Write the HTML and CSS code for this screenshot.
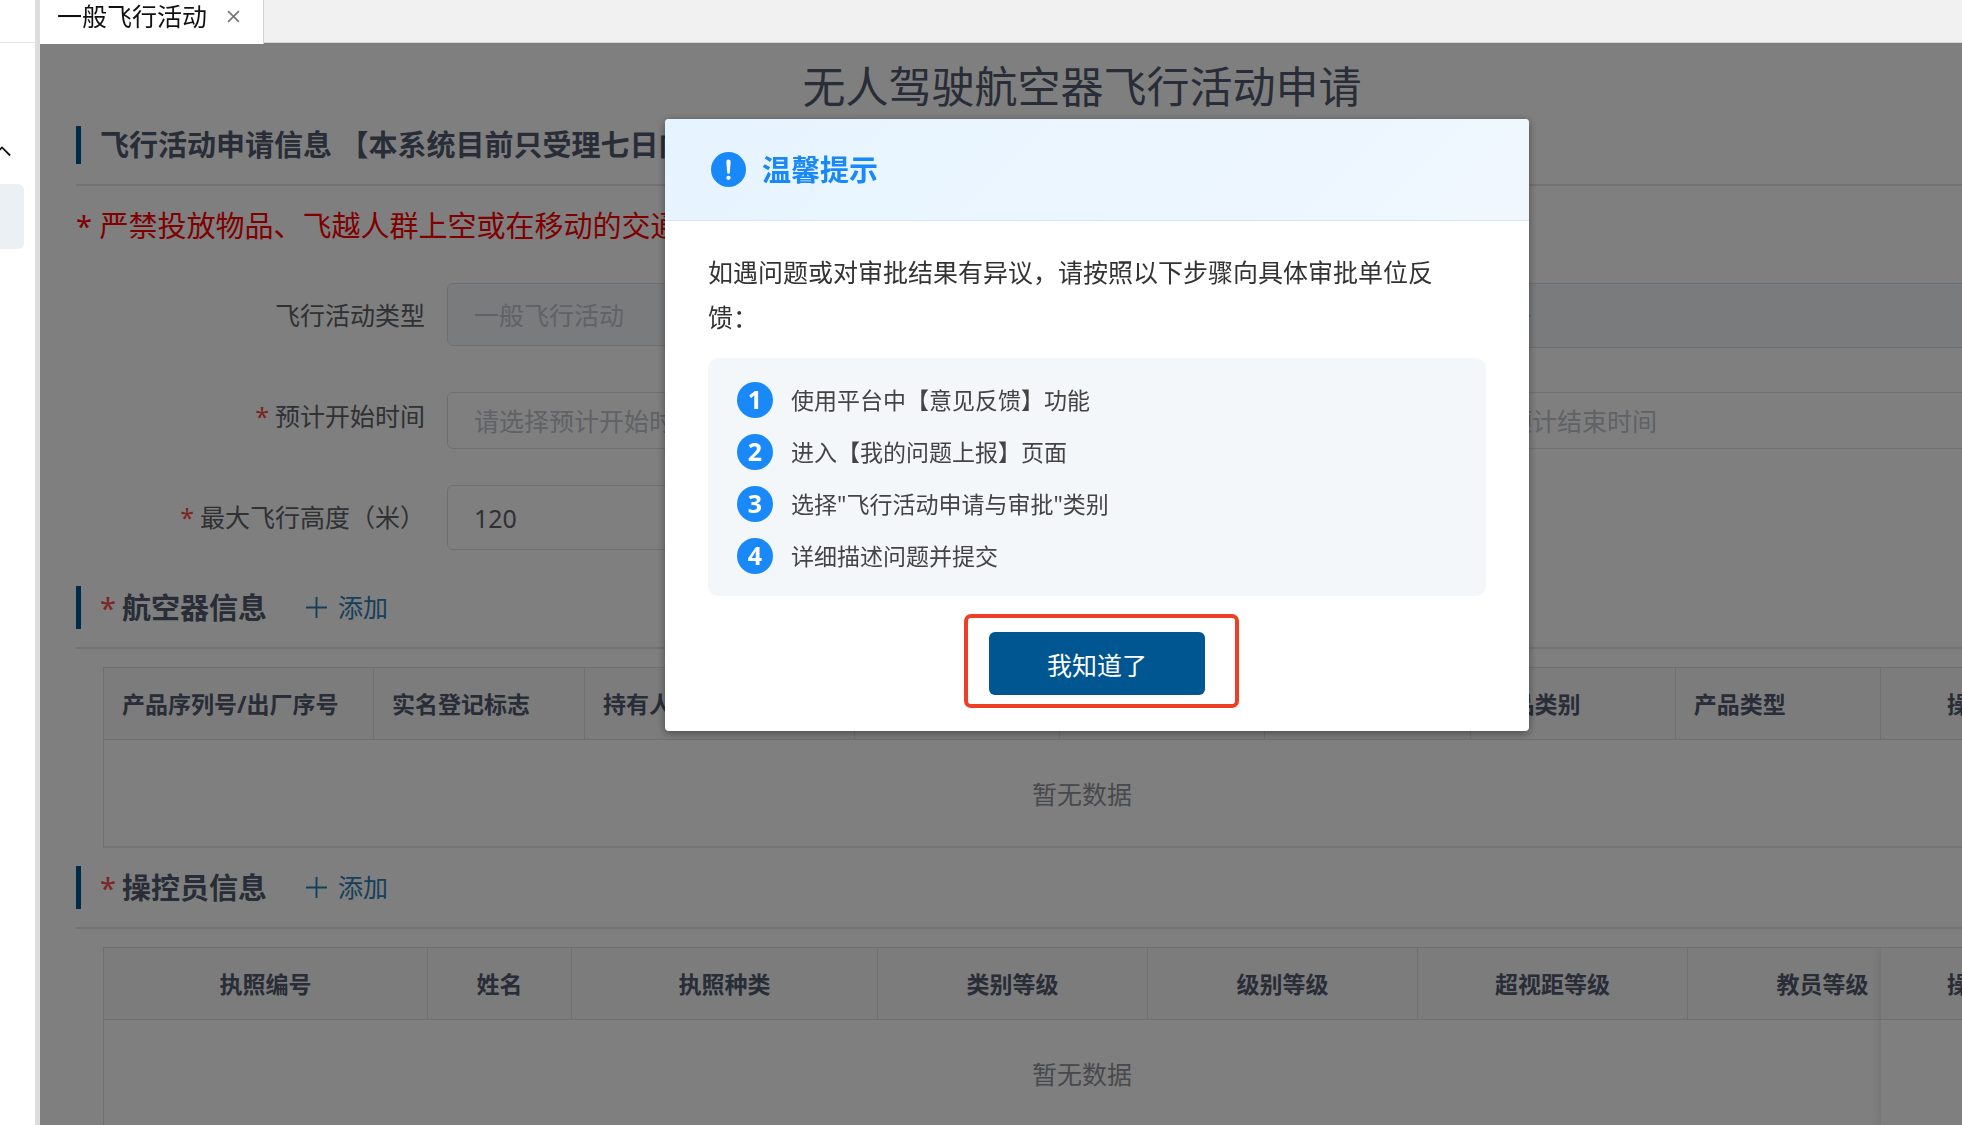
FILE: index.html
```html
<!DOCTYPE html>
<html lang="zh-CN">
<head>
    <meta charset="UTF-8">
    <meta name="viewport" content="width=device-width, initial-scale=1.0">
    <title>无人驾驶航空器飞行活动申请</title>
    <link rel="stylesheet" href="styles.css">
</head>
<body>
    <aside class="sidebar">
        <div class="sidebar-top"></div>
        <svg class="caret" viewBox="0 0 20 12"><path d="M1 11 L10 2 L19 11"/></svg>
        <div class="menu-active"></div>
    </aside>

    <div class="workspace">
        <nav class="tabs">
            <div class="tab">
                <a href="#">一般飞行活动</a>
                <button type="button" class="tab-close" aria-label="关闭">
                    <svg viewBox="0 0 12 12"><path d="M1 1 L11 11 M11 1 L1 11"/></svg>
                </button>
            </div>
        </nav>

        <main class="page">
            <h1>无人驾驶航空器飞行活动申请</h1>

            <div class="section-head">
                <h2 class="short">飞行活动申请信息 【本系统目前只受理七日内的申请】</h2>
            </div>
            <p class="warning">* 严禁投放物品、飞越人群上空或在移动的交通工具上操控</p>

            <form class="form">
                <label for="type">飞行活动类型</label>
                <select id="type" class="select-type" disabled><option>一般飞行活动</option></select>
                <label for="mode">任务性质</label>
                <select id="mode" disabled><option>其他任务</option></select>

                <label for="start" class="required">预计开始时间</label>
                <input type="text" id="start" class="date" placeholder="请选择预计开始时间">
                <label for="end" class="required">预计结束时间</label>
                <input type="text" id="end" class="date" placeholder="请选择预计结束时间">

                <label for="height" class="required">最大飞行高度（米）</label>
                <input type="text" id="height" value="120">
            </form>

            <div class="section-head">
                <h2 class="required">航空器信息</h2>
                <button type="button" class="add">
                    <svg viewBox="0 0 22 22"><path d="M11 0 V22 M0 11 H22"/></svg>添加
                </button>
            </div>
            <div class="table-box">
                <table class="aircraft">
                    <colgroup>
                        <col class="w270"><col class="w211"><col class="w270"><col><col><col><col><col><col class="w179">
                    </colgroup>
                    <thead>
                        <tr>
                            <th>产品序列号/出厂序号</th>
                            <th>实名登记标志</th>
                            <th>持有人</th>
                            <th>产品名称</th>
                            <th>产品型号</th>
                            <th>生产厂商</th>
                            <th>产品类别</th>
                            <th>产品类型</th>
                            <th class="center">操作</th>
                        </tr>
                    </thead>
                </table>
                <div class="empty">暂无数据</div>
            </div>

            <div class="section-head">
                <h2 class="required">操控员信息</h2>
                <button type="button" class="add">
                    <svg viewBox="0 0 22 22"><path d="M11 0 V22 M0 11 H22"/></svg>添加
                </button>
            </div>
            <div class="table-box has-fixed">
                <table class="pilots">
                    <colgroup>
                        <col class="w324"><col class="w144"><col class="w306"><col class="w270"><col class="w270"><col class="w270"><col class="w270"><col class="w179">
                    </colgroup>
                    <thead>
                        <tr>
                            <th>执照编号</th>
                            <th>姓名</th>
                            <th>执照种类</th>
                            <th>类别等级</th>
                            <th>级别等级</th>
                            <th>超视距等级</th>
                            <th>教员等级</th>
                            <th class="fixed">操作</th>
                        </tr>
                    </thead>
                </table>
                <div class="empty">暂无数据</div>
            </div>
        </main>

        <div class="mask">
            <section class="dialog" role="dialog" aria-labelledby="dialog-title">
                <header class="dialog-head">
                    <svg class="info" viewBox="0 0 36 36">
                        <circle cx="18" cy="18" r="18"/>
                        <path d="M15.800 10 a2.200 2.200 0 0 1 4.400 0 L19.400 21 a1.400 1.400 0 0 1 -2.800 0 Z"/>
                        <circle class="dot" cx="18" cy="26.500" r="2.200"/>
                    </svg>
                    <h3 id="dialog-title">温馨提示</h3>
                </header>
                <div class="dialog-body">
                    <p>如遇问题或对审批结果有异议，请按照以下步骤向具体审批单位反馈：</p>
                    <ol class="steps">
                        <li><span class="num">1</span>使用平台中【意见反馈】功能</li>
                        <li><span class="num">2</span>进入【我的问题上报】页面</li>
                        <li><span class="num">3</span>选择"飞行活动申请与审批"类别</li>
                        <li><span class="num">4</span>详细描述问题并提交</li>
                    </ol>
                </div>
                <footer class="dialog-foot">
                    <button type="button" class="confirm">我知道了</button>
                    <span class="highlight"></span>
                </footer>
            </section>
        </div>
    </div>
</body>
</html>
```
FILE: styles.css
```css
* {
    box-sizing: border-box;
}
body {
    margin: 0;
    display: flex;
    height: 100vh;
    overflow: hidden;
    background: #fff;
    color: #606266;
    font-family: "Noto Sans", "Noto Sans CJK SC", sans-serif;
    font-size: 25px;
}
h1, h2, h3, p, ol {
    margin: 0;
    padding: 0;
}
button, input, select {
    font: inherit;
}

/* Sidebar */
.sidebar {
    flex: none;
    width: 40px;
    border-right: 5px solid #ddd;
    overflow: hidden;
}
.sidebar-top {
    height: 43px;
    border-bottom: 1px solid #e4e4e4;
}
.caret {
    display: block;
    width: 18px;
    height: 12px;
    margin: 102px 0 27px -7px;
    fill: none;
    stroke: #111;
    stroke-width: 2;
}
.menu-active {
    width: 24px;
    height: 65px;
    border-radius: 0 6px 6px 0;
    background: #ebf0f4;
}

/* Tabs */
.workspace {
    position: relative;
    flex: 1;
    min-width: 0;
    height: 100vh;
    overflow: hidden;
}
.tabs {
    display: flex;
    height: 43px;
    background: #f1f1f1;
    border-bottom: 1px solid #d0d3d3;
}
.tab {
    position: relative;
    z-index: 2;
    display: flex;
    align-items: center;
    gap: 20px;
    height: 44px;
    padding: 0 23px 12px 17px;
    background: #fff;
    border-right: 1px solid #d0d3d3;
}
.tab a {
    color: #111;
    line-height: 32px;
    text-decoration: none;
}
.tab-close {
    display: flex;
    padding: 0;
    border: 0;
    background: none;
}
.tab-close svg {
    width: 13px;
    height: 13px;
    stroke: #777;
    stroke-width: 1.5;
}

/* Page runs past the right edge of the window */
.page {
    margin-right: -162px;
    padding: 14px 36px 0;
}
h1 {
    margin-bottom: 6px;
    color: #515a6e;
    font-size: 43px;
    font-weight: 400;
    line-height: 60px;
    text-align: center;
}
.section-head {
    display: flex;
    align-items: center;
    height: 63px;
    padding-bottom: 18px;
    border-bottom: 2px solid #e4e4e4;
}
h2 {
    padding-left: 19px;
    border-left: 5px solid #005691;
    color: #515a6e;
    font-size: 29px;
    line-height: 43px;
    white-space: nowrap;
}
h2.short {
    line-height: 38px;
}
.required::before {
    content: "*";
    margin-right: 6px;
    color: #f34d4d;
    font-weight: 400;
}
.add {
    display: flex;
    align-items: center;
    gap: 11px;
    margin-left: 39px;
    padding: 0;
    border: 0;
    background: none;
    color: #2d7fb4;
    line-height: 43px;
}
.add svg {
    width: 21px;
    height: 21px;
    stroke: currentColor;
    stroke-width: 2;
}
.warning {
    margin: 17px 0 34px;
    color: #f00;
    font-size: 29px;
    line-height: 46px;
    white-space: nowrap;
}

/* Form */
.form {
    display: grid;
    grid-template-columns: 349px 1fr 231px 1fr;
    grid-auto-rows: 65px;
    gap: 36px 22px;
    margin-bottom: 36px;
}
.form label {
    line-height: 65px;
    text-align: right;
    white-space: nowrap;
}
.form input, .form select {
    width: 100%;
    height: 65px;
    padding: 0 26px;
    border: 1px solid #dcdfe6;
    border-radius: 6px;
    background: #fff;
    color: #606266;
}
.form select {
    appearance: none;
    background: #f5f7fa;
    color: #c0c4cc;
    opacity: 1;
}
.form .select-type {
    height: 63px;
}
.form .date {
    align-self: end;
    height: 57px;
}
.form input::placeholder {
    color: #c0c4cc;
    opacity: 1;
}

/* Tables */
.table-box {
    position: relative;
    margin: 18px 27px;
    overflow: hidden;
    border: 1px solid #e0e1e2;
    border-bottom: 2px solid #e6e8f0;
}
table {
    width: 100%;
    table-layout: fixed;
    border-collapse: separate;
    border-spacing: 0;
}
th {
    height: 72px;
    padding: 0 18px;
    border-right: 1px solid #e0e1e2;
    border-bottom: 1px solid #e0e1e2;
    background: #f8f8f9;
    color: #515a6e;
    font-size: 23px;
    line-height: 32px;
    text-align: left;
    white-space: nowrap;
}
.center, .pilots th {
    text-align: center;
}
.pilots {
    width: 2033px;
}
.pilots .fixed {
    position: sticky;
    right: 0;
}
.has-fixed::after {
    content: "";
    position: absolute;
    top: 0;
    right: 0;
    bottom: 0;
    width: 179px;
    box-shadow: 0 0 10px rgba(0, 0, 0, 0.15);
}
.w144 { width: 144px; }
.w179 { width: 179px; }
.w211 { width: 211px; }
.w270 { width: 270px; }
.w306 { width: 306px; }
.w324 { width: 324px; }
.empty {
    padding-top: 2px;
    color: #909399;
    line-height: 104px;
    text-align: center;
}

/* Dialog, centred on the page and not on the visible part of it */
.mask {
    position: absolute;
    top: 43px;
    right: -162px;
    bottom: 0;
    left: 0;
    z-index: 1;
    padding: 76px 0 0 30px;
    background: rgba(0, 0, 0, 0.5);
}
.dialog {
    width: 864px;
    margin: 0 auto;
    overflow: hidden;
    border-radius: 4px;
    background: #fff;
    box-shadow: 0 2px 8px rgba(0, 0, 0, 0.4);
}
.dialog-head {
    display: flex;
    align-items: center;
    gap: 16px;
    height: 102px;
    padding: 0 46px;
    border-bottom: 1px solid #d0e8ff;
    background: linear-gradient(135deg, #e6f4ff, #f0f7ff);
}
.info {
    width: 35px;
    height: 35px;
    fill: #1989fa;
}
.info path, .info .dot {
    fill: #fff;
}
h3 {
    color: #1989fa;
    font-size: 29px;
    line-height: 44px;
}
.dialog-body {
    padding: 29px 43px 18px;
    color: #333;
}
.dialog-body p {
    margin-bottom: 18px;
    padding-right: 16px;
    line-height: 45px;
}
.steps {
    display: grid;
    gap: 16px;
    padding: 24px 29px 22px;
    border-radius: 10px;
    background: #f3f7fa;
    color: #444;
    font-size: 23px;
    list-style: none;
}
.steps li {
    display: flex;
    align-items: center;
    gap: 18px;
    line-height: 36px;
}
.num {
    width: 36px;
    height: 36px;
    border-radius: 50%;
    background: #1989fa;
    color: #fff;
    font-size: 25px;
    font-weight: 700;
    line-height: 34px;
    text-align: center;
}
.dialog-foot {
    position: relative;
    display: flex;
    justify-content: center;
    padding: 18px 0 36px;
}
.confirm {
    width: 216px;
    height: 63px;
    border: 0;
    border-radius: 6px;
    background: #005691;
    color: #fff;
}
.highlight {
    position: absolute;
    top: 0;
    left: 299px;
    width: 275px;
    height: 94px;
    border: 4px solid #ee3f26;
    border-radius: 7px;
}
```
